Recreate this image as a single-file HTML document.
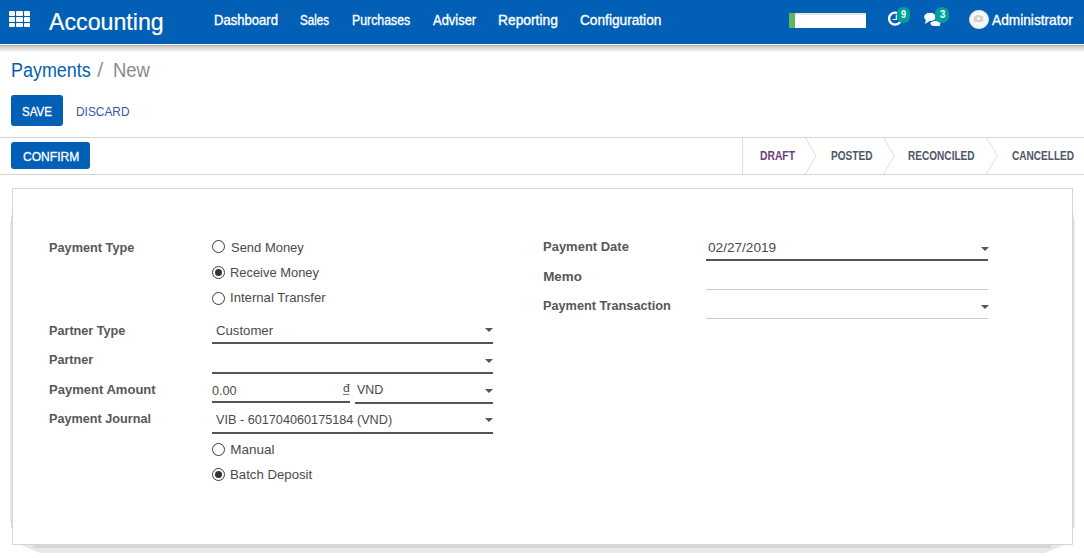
<!DOCTYPE html>
<html><head><meta charset="utf-8"><style>
html,body{margin:0;padding:0;width:1084px;height:558px;overflow:hidden;background:#fff;}
body{position:relative;font-family:"Liberation Sans",sans-serif;}
.t{position:absolute;white-space:nowrap;transform-origin:0 0;}
.r{position:absolute;box-sizing:content-box;}
</style></head><body>
<div class="r" style="left:0px;top:0px;width:1084px;height:44px;background:#015fb6;"></div>
<div class="r" style="left:0px;top:44px;width:1084px;height:1px;background:#ffffff;"></div>
<div class="r" style="left:0px;top:45px;width:1084px;height:1px;background:#b3b3b3;"></div>
<div class="r" style="left:0px;top:46px;width:1084px;height:1px;background:#cdcdcd;"></div>
<div class="r" style="left:0px;top:47px;width:1084px;height:1px;background:#d6d6d6;"></div>
<div class="r" style="left:0px;top:48px;width:1084px;height:1px;background:#dddddd;"></div>
<div class="r" style="left:0px;top:49px;width:1084px;height:1px;background:#e5e5e5;"></div>
<div class="r" style="left:0px;top:50px;width:1084px;height:1px;background:#eaeaea;"></div>
<div class="r" style="left:0px;top:51px;width:1084px;height:1px;background:#f8f8f8;"></div>
<div class="r" style="left:9px;top:11px;width:6.3px;height:5px;background:#fff;border-radius:1px"></div>
<div class="r" style="left:9px;top:17px;width:6.3px;height:4.5px;background:#fff;border-radius:1px"></div>
<div class="r" style="left:9px;top:23px;width:6.3px;height:4px;background:#fff;border-radius:1px"></div>
<div class="r" style="left:16.3px;top:11px;width:6.3px;height:5px;background:#fff;border-radius:1px"></div>
<div class="r" style="left:16.3px;top:17px;width:6.3px;height:4.5px;background:#fff;border-radius:1px"></div>
<div class="r" style="left:16.3px;top:23px;width:6.3px;height:4px;background:#fff;border-radius:1px"></div>
<div class="r" style="left:23.6px;top:11px;width:6.3px;height:5px;background:#fff;border-radius:1px"></div>
<div class="r" style="left:23.6px;top:17px;width:6.3px;height:4.5px;background:#fff;border-radius:1px"></div>
<div class="r" style="left:23.6px;top:23px;width:6.3px;height:4px;background:#fff;border-radius:1px"></div>
<div class="t" style="left:49.00px;top:9.85px;font-size:24.00px;line-height:24.00px;color:#fff;transform:scaleX(0.9663);-webkit-text-stroke:0.2px #fff;">Accounting</div>
<div class="t" style="left:213.64px;top:12.81px;font-size:14.00px;line-height:14.00px;color:#fff;transform:scaleX(0.9334);-webkit-text-stroke:0.35px #fff;">Dashboard</div>
<div class="t" style="left:300.28px;top:12.81px;font-size:14.00px;line-height:14.00px;color:#fff;transform:scaleX(0.8263);-webkit-text-stroke:0.35px #fff;">Sales</div>
<div class="t" style="left:352.18px;top:12.81px;font-size:14.00px;line-height:14.00px;color:#fff;transform:scaleX(0.8792);-webkit-text-stroke:0.35px #fff;">Purchases</div>
<div class="t" style="left:433.36px;top:12.81px;font-size:14.00px;line-height:14.00px;color:#fff;transform:scaleX(0.9245);-webkit-text-stroke:0.35px #fff;">Adviser</div>
<div class="t" style="left:498.02px;top:12.81px;font-size:14.00px;line-height:14.00px;color:#fff;transform:scaleX(0.9855);-webkit-text-stroke:0.35px #fff;">Reporting</div>
<div class="t" style="left:579.64px;top:12.81px;font-size:14.00px;line-height:14.00px;color:#fff;transform:scaleX(0.9767);-webkit-text-stroke:0.35px #fff;">Configuration</div>
<div class="r" style="left:789px;top:13px;width:77px;height:15px;background:#fff;box-shadow:inset 0 2px 0 #e6e6e6"></div>
<div class="r" style="left:789px;top:13px;width:6px;height:15px;background:#5cb85c;"></div>
<svg class="r" style="left:880px;top:5px" width="80" height="28" viewBox="0 0 80 28"><circle cx="15.1" cy="13.6" r="6" fill="none" stroke="#fff" stroke-width="2.4"/><path d="M16.3 9.8 V14.5 H12.6" fill="none" stroke="#fff" stroke-width="1.2"/><ellipse cx="55.5" cy="18.4" rx="5" ry="2.7" fill="#fff"/><path d="M57.5 19 L60.5 21.2 L54 20.5 Z" fill="#fff"/><ellipse cx="50" cy="12" rx="6.3" ry="4.7" fill="#fff" stroke="#015fb6" stroke-width="1"/><path d="M46 15 L44.8 19 L49.5 16.3 Z" fill="#fff"/></svg>
<div class="r" style="left:897.3px;top:7.1px;width:12.5px;height:15.5px;background:#00a09d;border-radius:6.2px"></div>
<div class="t" style="left:900.80px;top:9.69px;font-size:10.00px;line-height:10.00px;color:#fff;font-weight:bold;transform:scaleX(0.9107);">9</div>
<div class="r" style="left:935.2px;top:7.1px;width:13.8px;height:15.5px;background:#00a09d;border-radius:6.5px"></div>
<div class="t" style="left:939.70px;top:9.69px;font-size:10.00px;line-height:10.00px;color:#fff;font-weight:bold;transform:scaleX(0.9643);">3</div>
<div class="r" style="left:969px;top:9.5px;width:17.5px;height:17.5px;border-radius:50%;background:#f5f5f5;border:1px solid #e4e4e4"></div>
<div class="r" style="left:974px;top:16px;width:9px;height:5.6px;background:#d2d2d2;border-radius:1px"></div>
<div class="r" style="left:976px;top:15px;width:4px;height:1.2px;background:#d2d2d2;"></div>
<div class="r" style="left:977px;top:17.2px;width:3.2px;height:3.2px;border-radius:50%;background:#f5f5f5"></div>
<div class="t" style="left:992.00px;top:13.21px;font-size:14.00px;line-height:14.00px;color:#fff;transform:scaleX(0.9787);-webkit-text-stroke:0.35px #fff;">Administrator</div>
<div class="t" style="left:11.30px;top:61.25px;font-size:19.50px;line-height:19.50px;color:#015fb6;transform:scaleX(0.9199);">Payments</div>
<div class="t" style="left:96.78px;top:61.25px;font-size:19.50px;line-height:19.50px;color:#9a9a9a;transform:scaleX(1.1795);">/</div>
<div class="t" style="left:112.98px;top:61.25px;font-size:19.50px;line-height:19.50px;color:#8a8a8a;transform:scaleX(0.9476);">New</div>
<div class="r" style="left:11px;top:95px;width:52px;height:31px;background:#015fb6;border-radius:3px"></div>
<div class="t" style="left:22.44px;top:104.53px;font-size:13.50px;line-height:13.50px;color:#fff;transform:scaleX(0.8511);-webkit-text-stroke:0.3px #fff;">SAVE</div>
<div class="t" style="left:76.30px;top:104.53px;font-size:13.50px;line-height:13.50px;color:#2f5aa8;transform:scaleX(0.8800);">DISCARD</div>
<div class="r" style="left:0px;top:137px;width:1084px;height:1px;background:#d4d4d4;"></div>
<div class="r" style="left:0px;top:174px;width:1084px;height:1px;background:#d4d4d4;"></div>
<div class="r" style="left:11px;top:142px;width:79px;height:27px;background:#015fb6;border-radius:3px"></div>
<div class="t" style="left:22.78px;top:149.81px;font-size:13.40px;line-height:13.40px;color:#fff;transform:scaleX(0.9003);-webkit-text-stroke:0.3px #fff;">CONFIRM</div>
<div class="r" style="left:742px;top:138px;width:1px;height:36px;background:#dcdcdc;"></div>
<svg class="r" style="left:0;top:0" width="1084" height="180"><polyline points="805.5,138 816,155.5 805.5,174" fill="none" stroke="#dedede" stroke-width="1"/><polyline points="883.5,138 894.5,155.5 883.5,174" fill="none" stroke="#dedede" stroke-width="1"/><polyline points="986.5,138 997.5,155.5 986.5,174" fill="none" stroke="#dedede" stroke-width="1"/></svg>
<div class="t" style="left:760.12px;top:149.70px;font-size:12.00px;line-height:12.00px;color:#6e3f78;font-weight:bold;transform:scaleX(0.8604);">DRAFT</div>
<div class="t" style="left:830.66px;top:149.70px;font-size:12.00px;line-height:12.00px;color:#505663;font-weight:bold;transform:scaleX(0.8427);">POSTED</div>
<div class="t" style="left:908.44px;top:149.70px;font-size:12.00px;line-height:12.00px;color:#505663;font-weight:bold;transform:scaleX(0.8391);">RECONCILED</div>
<div class="t" style="left:1011.78px;top:149.70px;font-size:12.00px;line-height:12.00px;color:#505663;font-weight:bold;transform:scaleX(0.8390);">CANCELLED</div>
<div class="r" style="left:11px;top:215px;width:1px;height:313px;background:#e2e2e2;"></div>
<div class="r" style="left:10px;top:221px;width:1px;height:302px;background:#e8e8e8;"></div>
<div class="r" style="left:1073px;top:215px;width:1px;height:313px;background:#e2e2e2;"></div>
<div class="r" style="left:1074px;top:221px;width:1px;height:307px;background:#e8e8e8;"></div>
<svg class="r" style="left:0;top:540px" width="1084" height="18"><path d="M21 5 L40 13 L1045 13 L1064 5 Z" fill="#e8e8e8"/><rect x="34" y="5" width="1017" height="3" fill="#d6d6d6"/></svg>
<div class="r" style="left:12px;top:188px;width:1059px;height:355px;border:1px solid #d6d6d6;background:#fff"></div>
<div class="t" style="left:49.34px;top:240.61px;font-size:13.40px;line-height:13.40px;color:#575757;font-weight:bold;transform:scaleX(0.9502);">Payment Type</div>
<div class="t" style="left:49.00px;top:324.21px;font-size:13.40px;line-height:13.40px;color:#575757;font-weight:bold;transform:scaleX(0.9444);">Partner Type</div>
<div class="t" style="left:49.00px;top:352.81px;font-size:13.40px;line-height:13.40px;color:#575757;font-weight:bold;transform:scaleX(0.9429);">Partner</div>
<div class="t" style="left:49.00px;top:382.91px;font-size:13.40px;line-height:13.40px;color:#575757;font-weight:bold;transform:scaleX(0.9730);">Payment Amount</div>
<div class="t" style="left:49.00px;top:412.41px;font-size:13.40px;line-height:13.40px;color:#575757;font-weight:bold;transform:scaleX(0.9455);">Payment Journal</div>
<div class="t" style="left:543.22px;top:240.41px;font-size:13.40px;line-height:13.40px;color:#575757;font-weight:bold;transform:scaleX(0.9698);">Payment Date</div>
<div class="t" style="left:543.22px;top:270.31px;font-size:13.40px;line-height:13.40px;color:#575757;font-weight:bold;">Memo</div>
<div class="t" style="left:543.22px;top:299.41px;font-size:13.40px;line-height:13.40px;color:#575757;font-weight:bold;transform:scaleX(0.9488);">Payment Transaction</div>
<div class="t" style="left:231.12px;top:240.53px;font-size:13.50px;line-height:13.50px;color:#4a4a4a;transform:scaleX(0.9607);">Send Money</div>
<div class="t" style="left:229.52px;top:266.48px;font-size:13.50px;line-height:13.50px;color:#4a4a4a;transform:scaleX(0.9558);">Receive Money</div>
<div class="t" style="left:229.52px;top:290.93px;font-size:13.50px;line-height:13.50px;color:#4a4a4a;transform:scaleX(0.9735);">Internal Transfer</div>
<div class="t" style="left:216.44px;top:324.33px;font-size:13.50px;line-height:13.50px;color:#4a4a4a;transform:scaleX(0.9751);">Customer</div>
<div class="t" style="left:212.00px;top:383.63px;font-size:13.50px;line-height:13.50px;color:#4a4a4a;transform:scaleX(0.9375);">0.00</div>
<div class="t" style="left:357.00px;top:383.23px;font-size:13.50px;line-height:13.50px;color:#4a4a4a;transform:scaleX(0.9170);">VND</div>
<div class="t" style="left:216.44px;top:413.23px;font-size:13.50px;line-height:13.50px;color:#4a4a4a;transform:scaleX(0.9386);">VIB - 601704060175184 (VND)</div>
<div class="t" style="left:230.20px;top:442.53px;font-size:13.50px;line-height:13.50px;color:#4a4a4a;">Manual</div>
<div class="t" style="left:230.20px;top:468.03px;font-size:13.50px;line-height:13.50px;color:#4a4a4a;transform:scaleX(0.9778);">Batch Deposit</div>
<div class="t" style="left:707.78px;top:241.13px;font-size:13.50px;line-height:13.50px;color:#4a4a4a;transform:scaleX(1.0077);">02/27/2019</div>
<div class="t" style="left:343.20px;top:382.92px;font-size:11.50px;line-height:11.50px;color:#4a4a4a;transform:scaleX(1.0559);">đ</div>
<div class="r" style="left:343px;top:394px;width:6px;height:1px;background:#777;"></div>
<div class="r" style="left:212px;top:240px;width:11px;height:11px;border:1px solid #3a3a3a;border-radius:50%;background:#fff"></div>
<div class="r" style="left:212px;top:266px;width:11px;height:11px;border:1px solid #3a3a3a;border-radius:50%;background:#fff"></div>
<div class="r" style="left:215px;top:269px;width:7px;height:7px;border-radius:50%;background:#333"></div>
<div class="r" style="left:212px;top:292px;width:11px;height:11px;border:1px solid #3a3a3a;border-radius:50%;background:#fff"></div>
<div class="r" style="left:212px;top:443px;width:11px;height:11px;border:1px solid #3a3a3a;border-radius:50%;background:#fff"></div>
<div class="r" style="left:212px;top:468px;width:11px;height:11px;border:1px solid #3a3a3a;border-radius:50%;background:#fff"></div>
<div class="r" style="left:215px;top:471px;width:7px;height:7px;border-radius:50%;background:#333"></div>
<div class="r" style="left:212px;top:342px;width:281px;height:2px;background:#555;"></div>
<div class="r" style="left:212px;top:372px;width:281px;height:2px;background:#555;"></div>
<div class="r" style="left:212px;top:401px;width:138px;height:2px;background:#555;"></div>
<div class="r" style="left:355px;top:402px;width:138px;height:2px;background:#555;"></div>
<div class="r" style="left:212px;top:432px;width:281px;height:2px;background:#555;"></div>
<div class="r" style="left:706px;top:259px;width:282px;height:2px;background:#555;"></div>
<div class="r" style="left:706px;top:289px;width:282px;height:1px;background:#c8c8c8;"></div>
<div class="r" style="left:706px;top:318px;width:282px;height:1px;background:#c8c8c8;"></div>
<div class="r" style="left:485.3px;top:328px;width:0;height:0;border-left:4px solid transparent;border-right:4px solid transparent;border-top:4.5px solid #555"></div>
<div class="r" style="left:485.3px;top:358.7px;width:0;height:0;border-left:4px solid transparent;border-right:4px solid transparent;border-top:4.5px solid #555"></div>
<div class="r" style="left:485.3px;top:389px;width:0;height:0;border-left:4px solid transparent;border-right:4px solid transparent;border-top:4.5px solid #555"></div>
<div class="r" style="left:485.3px;top:418px;width:0;height:0;border-left:4px solid transparent;border-right:4px solid transparent;border-top:4.5px solid #555"></div>
<div class="r" style="left:980.6px;top:247px;width:0;height:0;border-left:4px solid transparent;border-right:4px solid transparent;border-top:4.5px solid #555"></div>
<div class="r" style="left:980.6px;top:305px;width:0;height:0;border-left:4px solid transparent;border-right:4px solid transparent;border-top:4.5px solid #555"></div>
</body></html>
